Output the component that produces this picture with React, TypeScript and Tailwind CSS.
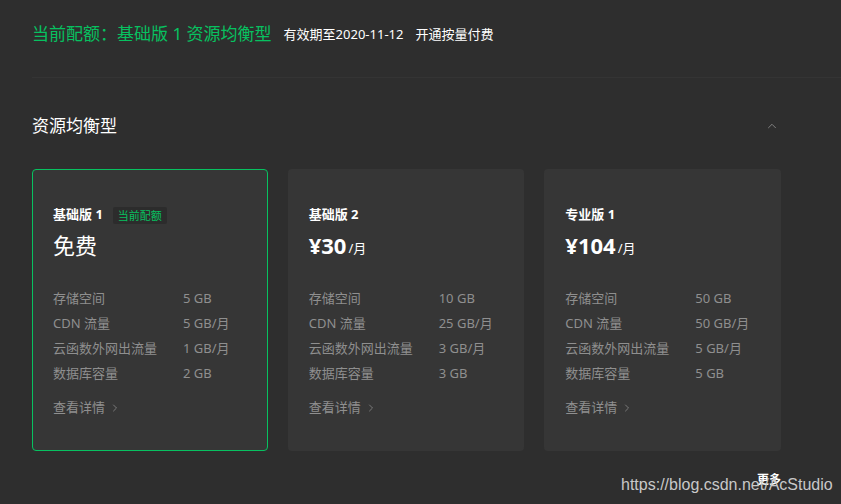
import { ChevronUp, ChevronRight } from 'lucide-react'

type Plan = {
  name: string
  price: string
  unit?: string
  current?: boolean
  specs: [string, string][]
}

const plans: Plan[] = [
  {
    name: '基础版 1',
    price: '免费',
    current: true,
    specs: [
      ['存储空间', '5 GB'],
      ['CDN 流量', '5 GB/月'],
      ['云函数外网出流量', '1 GB/月'],
      ['数据库容量', '2 GB'],
    ],
  },
  {
    name: '基础版 2',
    price: '¥30',
    unit: '/月',
    specs: [
      ['存储空间', '10 GB'],
      ['CDN 流量', '25 GB/月'],
      ['云函数外网出流量', '3 GB/月'],
      ['数据库容量', '3 GB'],
    ],
  },
  {
    name: '专业版 1',
    price: '¥104',
    unit: '/月',
    specs: [
      ['存储空间', '50 GB'],
      ['CDN 流量', '50 GB/月'],
      ['云函数外网出流量', '5 GB/月'],
      ['数据库容量', '5 GB'],
    ],
  },
]

function PlanCard({ plan }: { plan: Plan }) {
  return (
    <div
      className={
        plan.current
          ? 'h-[282px] w-[236px] rounded-[4px] border border-[#07c160] bg-[#363636] px-[20px] pt-[35px]'
          : 'h-[282px] w-[237px] rounded-[4px] border border-transparent bg-[#363636] px-[20px] pt-[35px]'
      }
    >
      <div className="flex h-[20px] items-center gap-[10px]">
        <span className="text-[13px] font-bold text-white">{plan.name}</span>
        {plan.current && (
          <span className="rounded-[2px] bg-[#2c2c2c] px-[5px] text-[11px] leading-[17px] text-[#07c160]">
            当前配额
          </span>
        )}
      </div>
      <div className="mt-[5px] flex h-[30px] items-end">
        {plan.unit ? (
          <>
            <span className="text-[22px] font-bold leading-[30px] text-white">{plan.price}</span>
            <span className="ml-[2px] pb-[3px] text-[13px] leading-[18px] text-white">{plan.unit}</span>
          </>
        ) : (
          <span className="text-[22px] leading-[30px] text-white">{plan.price}</span>
        )}
      </div>
      <div className="mt-[26px] flex flex-col">
        {plan.specs.map(([label, value]) => (
          <div key={label} className="flex h-[25px] items-center text-[13px] text-[#8f8f8f]">
            <span className="w-[130px]">{label}</span>
            <span>{value}</span>
          </div>
        ))}
      </div>
      <div className="mt-[12px] flex items-center gap-[4px] text-[13px] text-[#8f8f8f]">
        <span>查看详情</span>
        <ChevronRight size={12} strokeWidth={1.5} />
      </div>
    </div>
  )
}

export default function App() {
  return (
    <main
      className="relative h-[504px] w-[841px] overflow-hidden bg-[#2e2e2e]"
      style={{ fontFamily: '"Noto Sans", "Noto Sans CJK SC", sans-serif' }}
    >
      <header className="ml-[32px] flex h-[78px] items-start gap-[12px] border-b border-[#343434] pt-[21px]">
        <span className="text-[17px] leading-[26px] text-[#07c160]">当前配额：基础版 1 资源均衡型</span>
        <span className="text-[13px] leading-[26px] text-white">有效期至2020-11-12</span>
        <span className="text-[13px] leading-[26px] text-white">开通按量付费</span>
      </header>

      <section className="w-[813px] pl-[32px] pr-[32px]">
        <div className="flex h-[91px] items-center justify-between pr-[2px] pt-[4px]">
          <h2 className="text-[17px] text-white">资源均衡型</h2>
          <ChevronUp size={14} strokeWidth={1.5} className="text-[#8a8a8a]" />
        </div>

        <div className="flex gap-[20px]">
          {plans.map((plan) => (
            <PlanCard key={plan.name} plan={plan} />
          ))}
        </div>

        <div className="mt-[20px] flex justify-end text-[12px] font-bold text-white">更多</div>
      </section>

      <div
        className="absolute left-[621px] top-[473px] text-[16px] text-[#c8c8c8]"
        style={{ fontFamily: '"Liberation Sans", Arial, sans-serif' }}
      >
        https://blog.csdn.net/AcStudio
      </div>
    </main>
  )
}
